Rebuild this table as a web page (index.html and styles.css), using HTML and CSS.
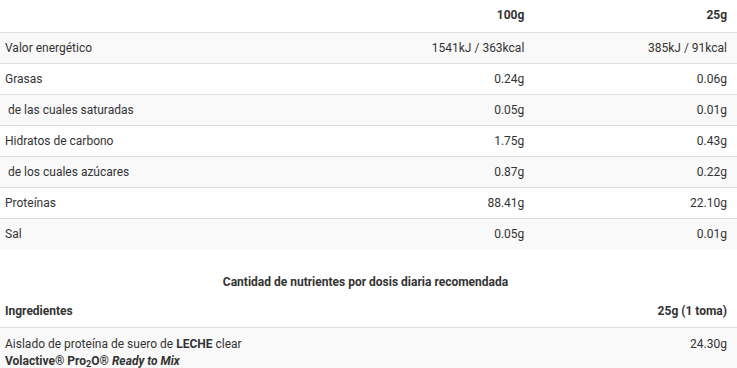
FILE: index.html
```html
<!DOCTYPE html>
<html lang="es">
<head>
    <meta charset="UTF-8">
    <meta name="viewport" content="width=device-width, initial-scale=1.0">
    <title>Información nutricional</title>
    <link rel="stylesheet" href="styles.css">
</head>
<body>
    <div class="nutrition">
        <table class="nutri-table">
            <thead>
                <tr>
                    <th class="label"></th>
                    <th class="num">100g</th>
                    <th class="num">25g</th>
                </tr>
            </thead>
            <tbody>
                <tr>
                    <td class="label">Valor energético</td>
                    <td class="num">1541kJ / 363kcal</td>
                    <td class="num">385kJ / 91kcal</td>
                </tr>
                <tr>
                    <td class="label">Grasas</td>
                    <td class="num">0.24g</td>
                    <td class="num">0.06g</td>
                </tr>
                <tr>
                    <td class="label">&nbsp;de las cuales saturadas</td>
                    <td class="num">0.05g</td>
                    <td class="num">0.01g</td>
                </tr>
                <tr>
                    <td class="label">Hidratos de carbono</td>
                    <td class="num">1.75g</td>
                    <td class="num">0.43g</td>
                </tr>
                <tr>
                    <td class="label">&nbsp;de los cuales azúcares</td>
                    <td class="num">0.87g</td>
                    <td class="num">0.22g</td>
                </tr>
                <tr>
                    <td class="label">Proteínas</td>
                    <td class="num">88.41g</td>
                    <td class="num">22.10g</td>
                </tr>
                <tr>
                    <td class="label">Sal</td>
                    <td class="num">0.05g</td>
                    <td class="num">0.01g</td>
                </tr>
            </tbody>
        </table>

        <h4 class="dose-title">Cantidad de nutrientes por dosis diaria recomendada</h4>

        <table class="nutri-table ingredients">
            <thead>
                <tr>
                    <th class="label">Ingredientes</th>
                    <th class="num">25g (1 toma)</th>
                </tr>
            </thead>
            <tbody>
                <tr>
                    <td class="label">
                        Aislado de proteína de suero de <strong>LECHE</strong> clear<br>
                        <strong>Volactive® Pro<sub>2</sub>O® <em>Ready to Mix</em></strong>
                    </td>
                    <td class="num">24.30g</td>
                </tr>
            </tbody>
        </table>
    </div>
</body>
</html>
```

FILE: styles.css
```css
* {
    margin: 0;
    padding: 0;
    box-sizing: border-box;
}

body {
    font-family: Roboto, 'Liberation Sans', Arial, sans-serif;
    font-size: 12px;
    color: #333;
    background: white;
}

.nutri-table {
    width: 100%;
    border-collapse: collapse;
}

.nutri-table th,
.nutri-table td {
    padding: 8px 10px 8px 5px;
    line-height: 14px;
    font-weight: normal;
    vertical-align: top;
}

.nutri-table th {
    font-weight: bold;
    height: 32px;
}

.nutri-table thead tr {
    border-bottom: 1px solid #ddd;
}

.nutri-table tbody tr {
    border-bottom: 1px solid #ddd;
}

.nutri-table tbody tr:last-child {
    border-bottom: none;
}

.nutri-table tbody tr:nth-child(odd) {
    background: #f9f9f9;
}

.nutri-table .label {
    text-align: left;
    width: 45%;
}

.nutri-table .num {
    text-align: right;
    width: 27.5%;
}

.dose-title {
    text-align: center;
    font-size: 12px;
    font-weight: bold;
    padding: 26px 6px 7px 0;
}

.ingredients .label {
    width: auto;
}

.ingredients td {
    line-height: 17px;
    padding-top: 8px;
}

.ingredients sub {
    font-size: 9px;
    vertical-align: -2px;
    line-height: 0;
}
```
